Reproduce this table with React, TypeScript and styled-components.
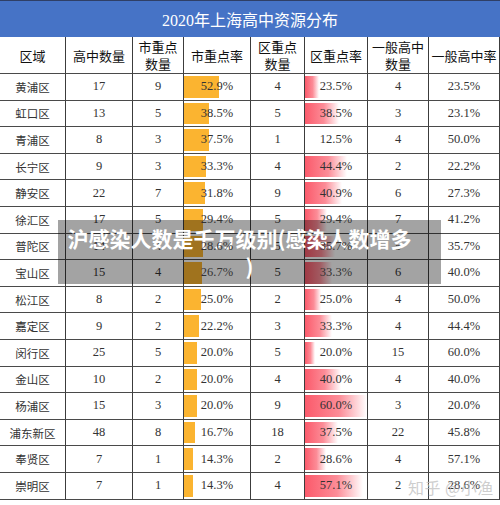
import React from "react";
import styled, { createGlobalStyle } from "styled-components";

const Global = createGlobalStyle`
  html, body { margin: 0; padding: 0; background: #ffffff; }
  body { width: 500px; height: 505px; overflow: hidden; }
  * { box-sizing: border-box; }
`;

const Page = styled.div`
  position: relative;
  width: 500px;
  height: 505px;
  background: #fff;
  overflow: hidden;
  font-family: "Liberation Serif", "Noto Sans CJK SC", serif;
`;

const TitleBar = styled.div`
  height: 37px;
  background: #4673c6;
  border-top: 1px solid #2f3f66;
  display: flex;
  align-items: center;
  justify-content: center;
  color: #ffffff;
  font-size: 16px;
  padding-bottom: 1px;
`;

const Grid = styled.div`
  display: grid;
  grid-template-columns: 66px 67px 51px 67px 54px 63px 61px 71px;
  grid-template-rows: 37px repeat(16, 26.6px);
`;

const Cell = styled.div`
  position: relative;
  display: flex;
  align-items: center;
  justify-content: center;
  border-right: 1px solid #3c3c3c;
  border-bottom: 1px solid #4a4a4a;
  color: #2a2a2a;
  overflow: hidden;
`;

const HeadCell = styled(Cell)`
  flex-direction: column;
  font-family: "Noto Sans CJK SC", sans-serif;
  font-size: 13px;
  line-height: 17px;
  color: #111;
  white-space: nowrap;
`;

const NameCell = styled(Cell)`
  font-family: "Noto Sans CJK SC", sans-serif;
  font-size: 11.5px;
  color: #333;
`;

const NumCell = styled(Cell)`
  font-size: 12.5px;
  color: #333;
`;

const Bar = styled.div<{ $kind: "orange" | "red" }>`
  position: absolute;
  left: 0;
  top: 2px;
  bottom: 2px;
  background: ${(p) =>
    p.$kind === "orange"
      ? "#fbb430"
      : "linear-gradient(to right, #fb5a6b 0%, #fc8c97 55%, #ffffff 100%)"};
`;

const BarText = styled.span`
  position: relative;
  z-index: 1;
`;

const Overlay = styled.div`
  position: absolute;
  left: 58px;
  top: 220px;
  width: 383px;
  height: 64px;
  padding-top: 4px;
  background: rgba(0, 0, 0, 0.36);
  color: #ffffff;
  font-family: "Noto Sans CJK SC", sans-serif;
  font-weight: 700;
  font-size: 21px;
  line-height: 28px;
  text-align: center;
  white-space: nowrap;
`;

const OverlayLine = styled.div<{ $shift?: number }>`
  padding-right: ${(p) => p.$shift ?? 0}px;
`;

const Watermark = styled.div`
  position: absolute;
  left: 408px;
  top: 475px;
  font-family: "Noto Sans CJK SC", sans-serif;
  font-size: 16px;
  color: rgba(190, 190, 190, 0.75);
  white-space: nowrap;
  letter-spacing: 0.5px;
`;

type Row = [string, number, number, number, number, number, number, number];

const rows: Row[] = [
  ["黄浦区", 17, 9, 52.9, 4, 23.5, 4, 23.5],
  ["虹口区", 13, 5, 38.5, 5, 38.5, 3, 23.1],
  ["青浦区", 8, 3, 37.5, 1, 12.5, 4, 50.0],
  ["长宁区", 9, 3, 33.3, 4, 44.4, 2, 22.2],
  ["静安区", 22, 7, 31.8, 9, 40.9, 6, 27.3],
  ["徐汇区", 17, 5, 29.4, 5, 29.4, 7, 41.2],
  ["普陀区", 14, 4, 28.6, 5, 35.7, 5, 35.7],
  ["宝山区", 15, 4, 26.7, 5, 33.3, 6, 40.0],
  ["松江区", 8, 2, 25.0, 2, 25.0, 4, 50.0],
  ["嘉定区", 9, 2, 22.2, 3, 33.3, 4, 44.4],
  ["闵行区", 25, 5, 20.0, 5, 20.0, 15, 60.0],
  ["金山区", 10, 2, 20.0, 4, 40.0, 4, 40.0],
  ["杨浦区", 15, 3, 20.0, 9, 60.0, 3, 20.0],
  ["浦东新区", 48, 8, 16.7, 18, 37.5, 22, 45.8],
  ["奉贤区", 7, 1, 14.3, 2, 28.6, 4, 57.1],
  ["崇明区", 7, 1, 14.3, 4, 57.1, 2, 28.6],
];

const headers: string[][] = [
  ["区域"],
  ["高中数量"],
  ["市重点", "数量"],
  ["市重点率"],
  ["区重点", "数量"],
  ["区重点率"],
  ["一般高中", "数量"],
  ["一般高中率"],
];

const pct = (v: number) => `${v.toFixed(1)}%`;

export default function App() {
  return (
    <Page>
      <Global />
      <TitleBar>2020年上海高中资源分布</TitleBar>
      <Grid>
        {headers.map((h, i) => (
          <HeadCell key={`h${i}`}>
            {h.map((line) => (
              <span key={line}>{line}</span>
            ))}
          </HeadCell>
        ))}
        {rows.map((r) => {
          const cityW = r[3];
          const distW = Math.max(0, ((r[5] - 12.5) / 47.5) * 100);
          return (
            <React.Fragment key={r[0]}>
              <NameCell>{r[0]}</NameCell>
              <NumCell>{r[1]}</NumCell>
              <NumCell>{r[2]}</NumCell>
              <NumCell>
                <Bar $kind="orange" style={{ width: `${cityW}%` }} />
                <BarText>{pct(r[3])}</BarText>
              </NumCell>
              <NumCell>{r[4]}</NumCell>
              <NumCell>
                {distW > 0 && <Bar $kind="red" style={{ width: `${distW}%` }} />}
                <BarText>{pct(r[5])}</BarText>
              </NumCell>
              <NumCell>{r[6]}</NumCell>
              <NumCell>{pct(r[7])}</NumCell>
            </React.Fragment>
          );
        })}
      </Grid>
      <Overlay>
        <OverlayLine $shift={20}>沪感染人数是千万级别(感染人数增多</OverlayLine>
        <OverlayLine>)</OverlayLine>
      </Overlay>
      <Watermark>知乎 @小渔</Watermark>
    </Page>
  );
}
